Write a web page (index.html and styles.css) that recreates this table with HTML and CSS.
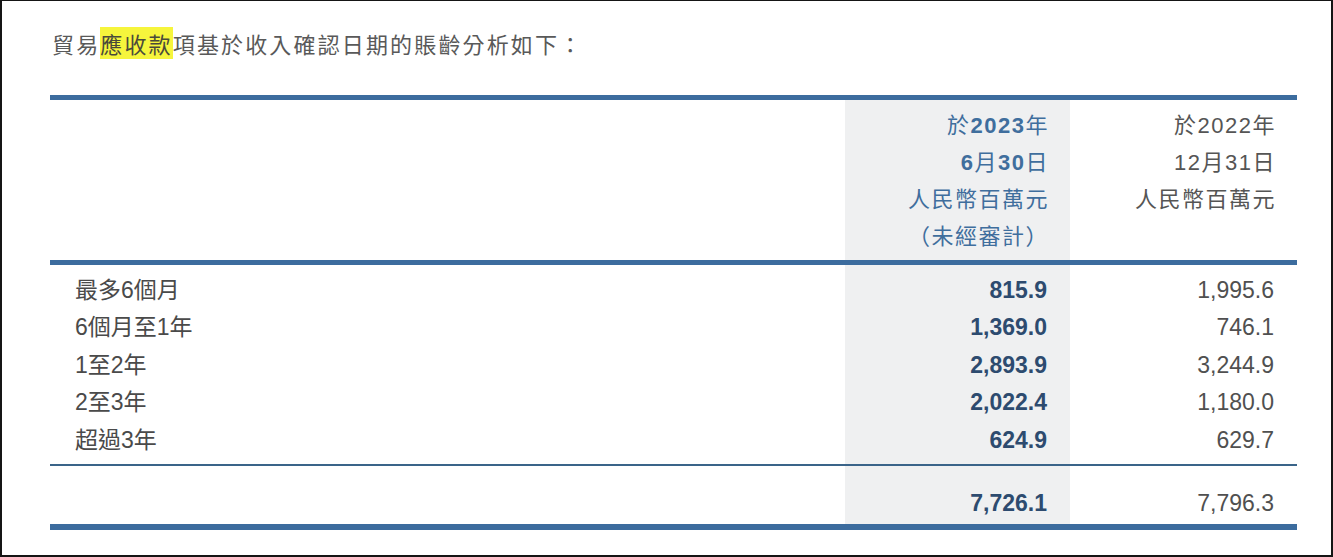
FILE: index.html
```html
<!DOCTYPE html>
<html lang="zh-Hant">
<head>
<meta charset="utf-8">
<title>賬齡分析</title>
<link rel="stylesheet" href="styles.css">
</head>
<body>
<div class="page">
  <p class="title">貿易<span class="hl">應收款</span>項基於收入確認日期的賬齡分析如下：</p>
  <div class="table">
    <div class="row head">
      <div class="cell label"></div>
      <div class="cell cur">
        <div>於<b>2023</b>年</div>
        <div><b>6</b>月<b>30</b>日</div>
        <div>人民幣百萬元</div>
        <div>（未經審計）</div>
      </div>
      <div class="cell prev">
        <div>於2022年</div>
        <div>12月31日</div>
        <div>人民幣百萬元</div>
      </div>
    </div>
    <div class="body">
      <div class="row item"><div class="cell label">最多6個月</div><div class="cell cur">815.9</div><div class="cell prev">1,995.6</div></div>
      <div class="row item"><div class="cell label">6個月至1年</div><div class="cell cur">1,369.0</div><div class="cell prev">746.1</div></div>
      <div class="row item"><div class="cell label">1至2年</div><div class="cell cur">2,893.9</div><div class="cell prev">3,244.9</div></div>
      <div class="row item"><div class="cell label">2至3年</div><div class="cell cur">2,022.4</div><div class="cell prev">1,180.0</div></div>
      <div class="row item"><div class="cell label">超過3年</div><div class="cell cur">624.9</div><div class="cell prev">629.7</div></div>
    </div>
    <div class="row total">
      <div class="cell label"></div>
      <div class="cell cur">7,726.1</div>
      <div class="cell prev">7,796.3</div>
    </div>
  </div>
</div>
</body>
</html>
```

FILE: styles.css
```css
html, body {
  margin: 0;
  padding: 0;
  background: #ffffff;
}

.page {
  box-sizing: border-box;
  width: 1333px;
  height: 557px;
  border: 2px solid #151515;
  border-top-width: 1px;
  padding: 0 0 0 48px;
  font-family: "Liberation Sans", "Noto Sans CJK TC", sans-serif;
}

.title {
  margin: 27px 0 37px 2px;
  height: 30px;
  line-height: 30px;
  font-family: "Noto Sans CJK TC", sans-serif;
  font-size: 22px;
  letter-spacing: 2.15px;
  color: #595959;
}

.hl {
  background: #f6f53c;
  color: #4a4a3a;
}

.table {
  width: 1247px;
  border-top: 5px solid #3c6c9e;
  border-bottom: 6px solid #3c6c9e;
}

.row {
  display: grid;
  grid-template-columns: 1fr 225px 227px;
}

.cell {
  text-align: right;
  padding-right: 23px;
}

.cell.label {
  text-align: left;
  padding: 0 0 0 25px;
}

.cur {
  background: #eff0f1;
}

.head {
  border-bottom: 5px solid #3c6c9e;
}

.head .cell {
  height: 160px;
  box-sizing: border-box;
  padding-top: 7px;
  font-size: 22px;
  line-height: 37px;
  letter-spacing: 1.5px;
}

.head .cur {
  color: #3f6e9d;
  padding-right: 21px;
}

.head .cur b {
  font-weight: bold;
}

.head .prev {
  color: #555555;
  padding-right: 21px;
}

.body {
  display: flex;
  flex-direction: column;
  border-bottom: 2px solid #3a6489;
}

.body .row:first-child .cell {
  padding-top: 7px;
}

.body .row:last-child .cell {
  padding-bottom: 5px;
}

.item .cell,
.total .cell {
  font-size: 23px;
  line-height: 37.4px;
}

.item .label {
  color: #4a4a4a;
}

.item .cur,
.total .cur {
  font-weight: bold;
  color: #2d4b6f;
}

.item .prev,
.total .prev {
  color: #505050;
}

.total .cell {
  padding-top: 19px;
  padding-bottom: 1.6px;
}
```
